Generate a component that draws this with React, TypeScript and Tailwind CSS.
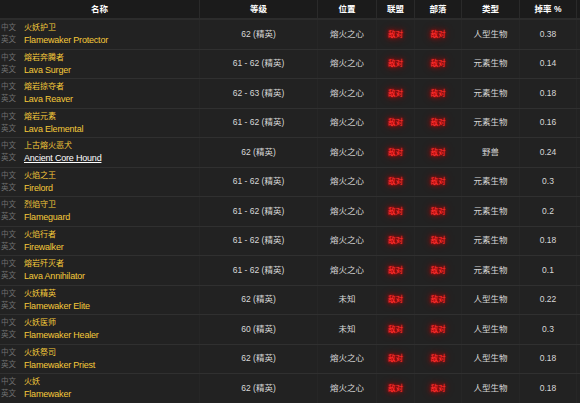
import React from "react";

type Row = {
  zh: string;
  en: string;
  level: string;
  loc: string;
  type: string;
  drop: string;
  link?: boolean;
};

const rows: Row[] = [
  { zh: "火妖护卫", en: "Flamewaker Protector", level: "62 (精英)", loc: "熔火之心", type: "人型生物", drop: "0.38" },
  { zh: "熔岩奔腾者", en: "Lava Surger", level: "61 - 62 (精英)", loc: "熔火之心", type: "元素生物", drop: "0.14" },
  { zh: "熔岩掠夺者", en: "Lava Reaver", level: "62 - 63 (精英)", loc: "熔火之心", type: "元素生物", drop: "0.18" },
  { zh: "熔岩元素", en: "Lava Elemental", level: "61 - 62 (精英)", loc: "熔火之心", type: "元素生物", drop: "0.16" },
  { zh: "上古熔火恶犬", en: "Ancient Core Hound", level: "62 (精英)", loc: "熔火之心", type: "野兽", drop: "0.24", link: true },
  { zh: "火焰之王", en: "Firelord", level: "61 - 62 (精英)", loc: "熔火之心", type: "元素生物", drop: "0.3" },
  { zh: "烈焰守卫", en: "Flameguard", level: "61 - 62 (精英)", loc: "熔火之心", type: "元素生物", drop: "0.2" },
  { zh: "火焰行者", en: "Firewalker", level: "61 - 62 (精英)", loc: "熔火之心", type: "元素生物", drop: "0.18" },
  { zh: "熔岩歼灭者", en: "Lava Annihilator", level: "61 - 62 (精英)", loc: "熔火之心", type: "元素生物", drop: "0.1" },
  { zh: "火妖精英", en: "Flamewaker Elite", level: "62 (精英)", loc: "未知", type: "人型生物", drop: "0.22" },
  { zh: "火妖医师", en: "Flamewaker Healer", level: "60 (精英)", loc: "未知", type: "人型生物", drop: "0.3" },
  { zh: "火妖祭司", en: "Flamewaker Priest", level: "62 (精英)", loc: "熔火之心", type: "人型生物", drop: "0.18" },
  { zh: "火妖", en: "Flamewaker", level: "62 (精英)", loc: "熔火之心", type: "人型生物", drop: "0.18" },
];

const font = {
  fontFamily: '"Liberation Sans", "Noto Sans CJK SC", Arial, sans-serif',
};

function Hostile() {
  return (
    <span className="text-[7.5px] text-[#ff3535] [text-shadow:0_0_2px_#ff0000,0_0_5px_#e00000,0_0_8px_#b00000]">
      敌对
    </span>
  );
}

export default function App() {
  return (
    <div className="w-[580px] h-[403px] overflow-hidden bg-[#222222]" style={font}>
      <div className="grid grid-cols-[200px_118px_59px_38px_47px_58px_57px_3px] h-[20px] bg-[#1b1b1b] border-b-2 border-[#2c2c2c] text-[8.5px] font-bold text-white">
        <div className="flex items-center justify-center border-r border-[#2a2a2a]">名称</div>
        <div className="flex items-center justify-center border-r border-[#2a2a2a]">等级</div>
        <div className="flex items-center justify-center border-r border-[#2a2a2a]">位置</div>
        <div className="flex items-center justify-center border-r border-[#2a2a2a]">联盟</div>
        <div className="flex items-center justify-center border-r border-[#2a2a2a]">部落</div>
        <div className="flex items-center justify-center border-r border-[#2a2a2a]">类型</div>
        <div className="flex items-center justify-center border-r border-[#2a2a2a]">掉率 %</div>
        <div />
      </div>
      {rows.map((r) => (
        <div
          key={r.en}
          className="grid grid-cols-[200px_118px_59px_38px_47px_58px_57px_3px] h-[29.5px] border-b border-[#303030] text-[8.5px] text-[#d8d8d8]"
        >
          <div className="flex flex-col justify-center pl-[1px] border-r border-[#262626] leading-[12px]">
            <div className="flex items-center">
              <span className="w-[23px] text-[7.5px] text-[#707070]">中文</span>
              <span className="text-[8px] text-[#f5c93a]">{r.zh}</span>
            </div>
            <div className="flex items-center">
              <span className="w-[23px] text-[7.5px] text-[#707070]">英文</span>
              {r.link ? (
                <span className="text-[9px] tracking-[-0.2px] text-white underline">{r.en}</span>
              ) : (
                <span className="text-[9px] tracking-[-0.2px] text-[#f5c93a]">{r.en}</span>
              )}
            </div>
          </div>
          <div className="flex items-center justify-center border-r border-[#262626]">{r.level}</div>
          <div className="flex items-center justify-center border-r border-[#262626]">{r.loc}</div>
          <div className="flex items-center justify-center border-r border-[#262626]">
            <Hostile />
          </div>
          <div className="flex items-center justify-center border-r border-[#262626]">
            <Hostile />
          </div>
          <div className="flex items-center justify-center border-r border-[#262626]">{r.type}</div>
          <div className="flex items-center justify-center border-r border-[#262626]">{r.drop}</div>
          <div />
        </div>
      ))}
    </div>
  );
}
